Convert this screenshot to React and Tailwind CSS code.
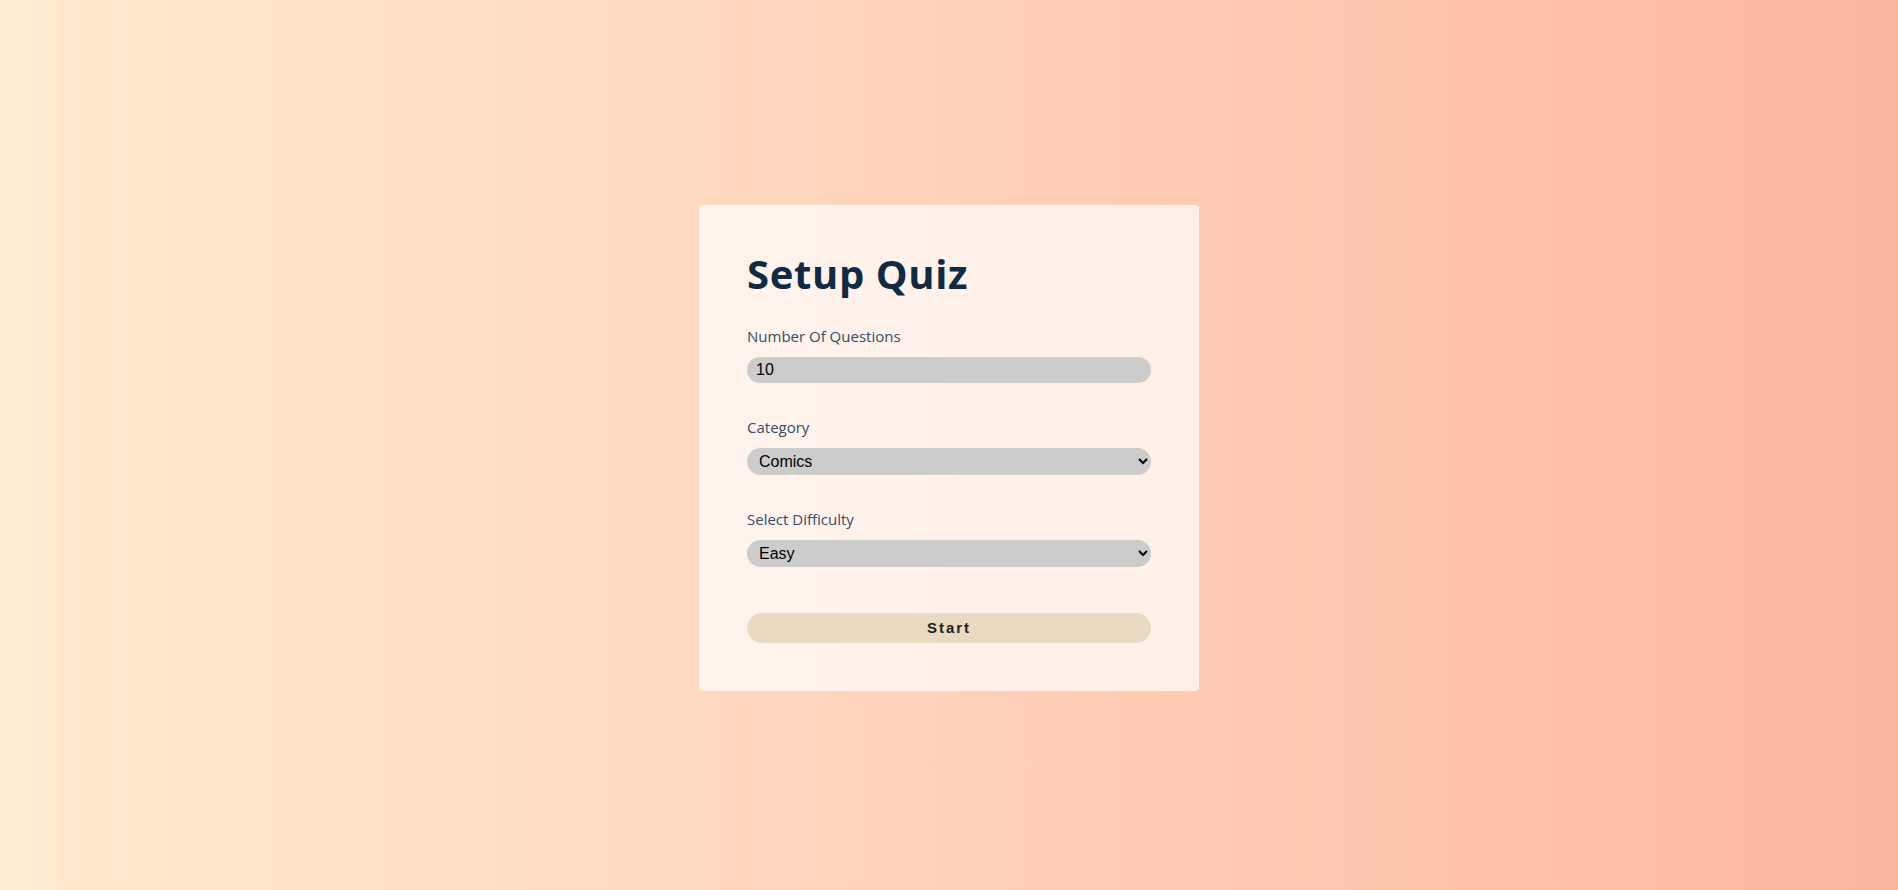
import React, { useState } from 'react';

export default function App() {
  const [amount, setAmount] = useState(10);
  const [category, setCategory] = useState('comics');
  const [difficulty, setDifficulty] = useState('easy');

  return (
    <main className="min-h-screen w-full flex items-center justify-center pt-[6px] bg-gradient-to-r from-[#ffecd2] to-[#fcb69f]">
      <section className="w-[500px] rounded bg-white/70 px-12 pt-[48px] pb-12" style={{ fontFamily: '"Open Sans", sans-serif' }}>
        <h2 className="text-[40px] leading-[41px] font-bold text-[#102a43] tracking-[0.04rem] mb-[30px]">
          Setup Quiz
        </h2>
        <form onSubmit={(e) => e.preventDefault()}>
          <div className="mb-8">
            <label htmlFor="amount" className="block text-[15px] leading-6 font-medium text-[#334e68] mb-[9px]">
              Number Of Questions
            </label>
            <input
              id="amount"
              type="number"
              value={amount}
              onChange={(e) => setAmount(e.target.value)}
              className="block w-full h-[26px] rounded-full bg-[#cccccc] border-0 px-[9px] text-base text-black outline-none"
              style={{ fontFamily: '"Liberation Sans", Arial, sans-serif' }}
            />
          </div>
          <div className="mb-8">
            <label htmlFor="category" className="block text-[15px] leading-6 font-medium text-[#334e68] mb-[9px]">
              Category
            </label>
            <select
              id="category"
              value={category}
              onChange={(e) => setCategory(e.target.value)}
              className="block w-full h-[27px] rounded-full bg-[#cccccc] border-0 pl-[8px] pr-2 text-base text-black outline-none"
              style={{ fontFamily: '"Liberation Sans", Arial, sans-serif' }}
            >
              <option value="comics">Comics</option>
              <option value="sports">Sports</option>
              <option value="history">History</option>
              <option value="politics">Politics</option>
            </select>
          </div>
          <div className="mb-[46px]">
            <label htmlFor="difficulty" className="block text-[15px] leading-6 font-medium text-[#334e68] mb-[9px]">
              Select Difficulty
            </label>
            <select
              id="difficulty"
              value={difficulty}
              onChange={(e) => setDifficulty(e.target.value)}
              className="block w-full h-[27px] rounded-full bg-[#cccccc] border-0 pl-[8px] pr-2 text-base text-black outline-none"
              style={{ fontFamily: '"Liberation Sans", Arial, sans-serif' }}
            >
              <option value="easy">Easy</option>
              <option value="medium">Medium</option>
              <option value="hard">Hard</option>
            </select>
          </div>
          <button
            type="submit"
            className="block w-full h-[30px] rounded-full bg-[#eadac1] text-[15px] font-bold tracking-[0.12rem] text-[#222222]"
            style={{ fontFamily: '"Liberation Sans", Arial, sans-serif' }}
          >
            Start
          </button>
        </form>
      </section>
    </main>
  );
}
